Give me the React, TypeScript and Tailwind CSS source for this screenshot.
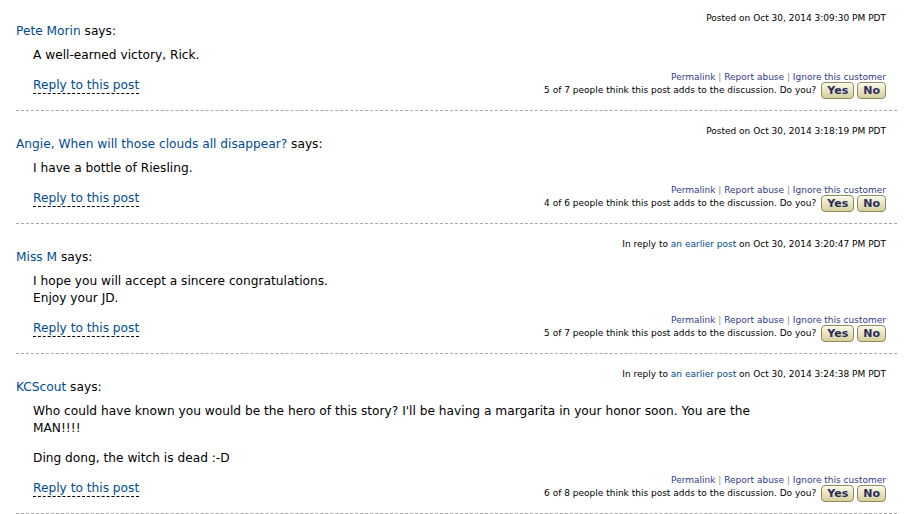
import React from "react";

type Post = {
  header: React.ReactNode;
  name: string;
  body: React.ReactNode;
  votes: string;
};

const linkBlue = "text-[#004b91]";

const posts: Post[] = [
  {
    header: <>Posted on Oct 30, 2014 3:09:30 PM PDT</>,
    name: "Pete Morin",
    body: <p>A well-earned victory, Rick.</p>,
    votes: "5 of 7 people think this post adds to the discussion. Do you?",
  },
  {
    header: <>Posted on Oct 30, 2014 3:18:19 PM PDT</>,
    name: "Angie, When will those clouds all disappear?",
    body: <p>I have a bottle of Riesling.</p>,
    votes: "4 of 6 people think this post adds to the discussion. Do you?",
  },
  {
    header: (
      <>
        In reply to <a className={linkBlue}>an earlier post</a> on Oct 30, 2014 3:20:47 PM PDT
      </>
    ),
    name: "Miss M",
    body: (
      <p>
        I hope you will accept a sincere congratulations.
        <br />
        Enjoy your JD.
      </p>
    ),
    votes: "5 of 7 people think this post adds to the discussion. Do you?",
  },
  {
    header: (
      <>
        In reply to <a className={linkBlue}>an earlier post</a> on Oct 30, 2014 3:24:38 PM PDT
      </>
    ),
    name: "KCScout",
    body: (
      <>
        <p className="whitespace-nowrap">
          Who could have known you would be the hero of this story? I'll be having a margarita in your honor soon. You are the
          <br />
          MAN!!!!
        </p>
        <p className="mt-[13px]">Ding dong, the witch is dead :-D</p>
      </>
    ),
    votes: "6 of 8 people think this post adds to the discussion. Do you?",
  },
];

function VoteButton({ label }: { label: string }) {
  return (
    <button className="h-[17px] rounded-[4px] border border-[#8f8b5c] bg-gradient-to-b from-[#fbfae8] to-[#d6d09c] px-[5px] text-[11px] font-bold leading-[15px] text-[#2d2d5e] shadow-[inset_0_1px_0_#ffffff]">
      {label}
    </button>
  );
}

function PostItem({ post }: { post: Post }) {
  return (
    <div className="border-b border-dashed border-[#a8a8a8] pr-[11px] pt-[14px] pb-[11px]">
      <div className="text-right text-[9px] leading-[12px] text-black">{post.header}</div>
      <div className="text-[12.2px] leading-[14px]">
        <a className={linkBlue}>{post.name}</a> <span className="text-black">says:</span>
      </div>
      <div className="mt-[9px] pl-[17px] text-[12.2px] leading-[17px] text-black">{post.body}</div>
      <div className="mt-[7px] flex items-start justify-between">
        <a className="mt-[7px] ml-[17px] border-b border-dashed border-black text-[12.2px] leading-[15px] text-[#004b91]">
          Reply to this post
        </a>
        <div className="flex flex-col items-end">
          <div className="-mb-[2px] text-[9px] leading-[13px] text-[#333a8a]">
            Permalink <span className="text-[#8a8a8a]">|</span> Report abuse{" "}
            <span className="text-[#8a8a8a]">|</span> Ignore this customer
          </div>
          <div className="flex items-center gap-[3px] text-[9px] text-black">
            <span className="mr-[2px]">{post.votes}</span>
            <VoteButton label="Yes" />
            <VoteButton label="No" />
          </div>
        </div>
      </div>
    </div>
  );
}

export default function App() {
  return (
    <div
      className="min-h-[514px] w-[913px] bg-white"
      style={{ fontFamily: '"DejaVu Sans", Verdana, sans-serif' }}
    >
      <div className="-mt-[2px] ml-[16px] w-[881px]">
        {posts.map((p, i) => (
          <PostItem key={i} post={p} />
        ))}
      </div>
    </div>
  );
}
